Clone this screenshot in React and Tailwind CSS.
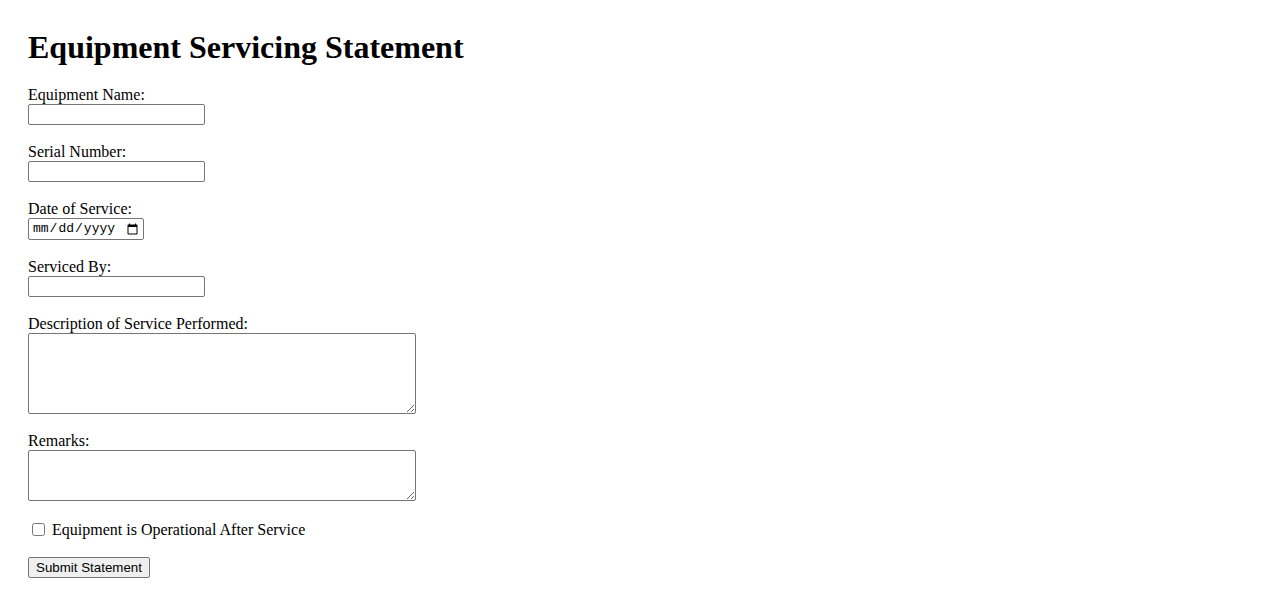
import React from 'react';

const fieldClass = 'block h-[21px] w-[177px] border border-[#767676] rounded-[2px] bg-white px-[2px] text-[13.33px] outline-none';

const Field = ({ label, children }) => (
  <div className="mb-[17px]">
    <label className="block leading-[19px]">{label}</label>
    {children}
  </div>
);

const App = () => {
  return (
    <div className="min-h-screen bg-white text-black" style={{ fontFamily: '"Liberation Serif", "Times New Roman", serif' }}>
      <div className="px-[28px] pt-[29px] pb-6 text-[16px]">
        <h1 className="text-[32px] font-bold leading-[37px] mb-[19px]">Equipment Servicing Statement</h1>

        <form onSubmit={(e) => e.preventDefault()}>
          <Field label="Equipment Name:">
            <input type="text" className={fieldClass} style={{ fontFamily: '"Liberation Sans", Arial, sans-serif' }} />
          </Field>

          <Field label="Serial Number:">
            <input type="text" className={fieldClass} style={{ fontFamily: '"Liberation Sans", Arial, sans-serif' }} />
          </Field>

          <Field label="Date of Service:">
            <input
              type="date"
              className="block h-[22px] w-[116px] border border-[#767676] rounded-[2px] bg-white pl-[3px] pr-[2px] text-[13px] font-['Liberation_Mono',monospace] outline-none"
            />
          </Field>

          <Field label="Serviced By:">
            <input type="text" className={fieldClass} style={{ fontFamily: '"Liberation Sans", Arial, sans-serif' }} />
          </Field>

          <Field label="Description of Service Performed:">
            <textarea className="block h-[81px] w-[388px] border border-[#767676] rounded-[2px] bg-white p-[2px] text-[13.33px] font-['Liberation_Mono',monospace] resize outline-none" />
          </Field>

          <Field label="Remarks:">
            <textarea className="block h-[51px] w-[388px] border border-[#767676] rounded-[2px] bg-white p-[2px] text-[13.33px] font-['Liberation_Mono',monospace] resize outline-none" />
          </Field>

          <div className="flex items-center h-[19px] mt-[19px] mb-[16px]">
            <input type="checkbox" id="operational" className="ml-[4px] mr-[7px] w-[13px] h-[13px] -mt-[1px]" />
            <label htmlFor="operational" className="leading-[19px]">Equipment is Operational After Service</label>
          </div>

          <button
            type="submit"
            className="h-[21px] w-[122px] border border-[#767676] rounded-[2px] bg-[#efefef] text-[13.33px] leading-[15px] text-black font-['Liberation_Sans',Arial,sans-serif]"
          >
            Submit Statement
          </button>
        </form>
      </div>
    </div>
  );
};

export default App;
